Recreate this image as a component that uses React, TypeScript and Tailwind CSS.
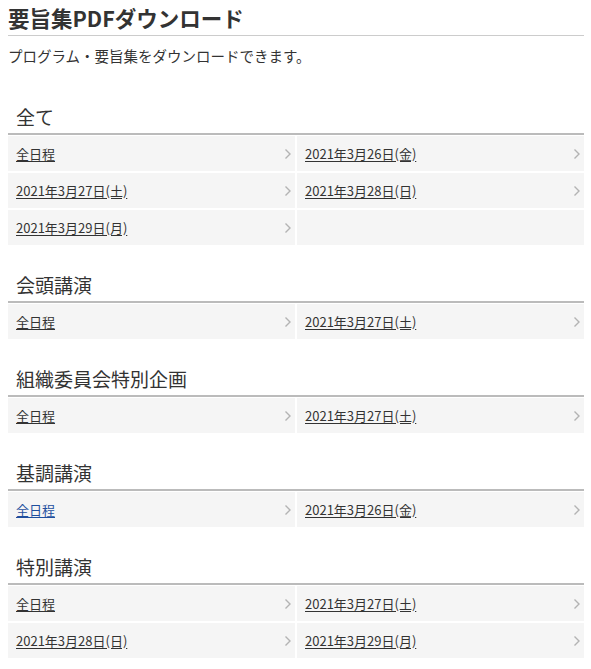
import React from "react";

type Item = { label: string; active?: boolean };
type Section = { title: string; items: Item[] };

const sections: Section[] = [
  {
    title: "全て",
    items: [
      { label: "全日程" },
      { label: "2021年3月26日(金)" },
      { label: "2021年3月27日(土)" },
      { label: "2021年3月28日(日)" },
      { label: "2021年3月29日(月)" },
    ],
  },
  { title: "会頭講演", items: [{ label: "全日程" }, { label: "2021年3月27日(土)" }] },
  { title: "組織委員会特別企画", items: [{ label: "全日程" }, { label: "2021年3月27日(土)" }] },
  { title: "基調講演", items: [{ label: "全日程", active: true }, { label: "2021年3月26日(金)" }] },
  {
    title: "特別講演",
    items: [
      { label: "全日程" },
      { label: "2021年3月27日(土)" },
      { label: "2021年3月28日(日)" },
      { label: "2021年3月29日(月)" },
    ],
  },
];

function Chevron() {
  return (
    <svg width="8" height="12" viewBox="0 0 8 12" className="shrink-0">
      <polyline points="1.5,1.5 6,6 1.5,10.5" fill="none" stroke="#b3b3b3" strokeWidth="1.4" />
    </svg>
  );
}

export default function App() {
  return (
    <div
      className="bg-white text-[#333333] w-[591px] min-h-[669px]"
      style={{ fontFamily: '"Noto Sans CJK JP", "Noto Sans", sans-serif' }}
    >
      <div className="ml-2 w-[576px]">
        <h1 className="text-[21.5px] font-bold leading-[35px] border-b border-[#cccccc] text-[#333333]">
          要旨集PDFダウンロード
        </h1>
        <p className="mt-[10px] text-[14.5px] leading-[20px]">プログラム・要旨集をダウンロードできます。</p>
        {sections.map((s, i) => (
          <section key={i} className={i === 0 ? "mt-[38px]" : "mt-[27px]"}>
            <h2 className="text-[19px] leading-[26px] pl-2 pb-[3px] border-b-2 border-[#bbbbbb] font-normal">
              {s.title}
            </h2>
            <ul className="grid grid-cols-2 gap-[2px] mt-[1px]">
              {s.items.map((it, j) => (
                <li key={j} className="h-[35px] bg-[#f5f5f5] flex items-center justify-between pl-2 pr-[3px]">
                  <a
                    href="#"
                    className={
                      "text-[13px] underline underline-offset-2 " +
                      (it.active ? "text-[#1f4f9e]" : "text-[#333333]")
                    }
                  >
                    {it.label}
                  </a>
                  <Chevron />
                </li>
              ))}
              {s.items.length % 2 === 1 && <li className="h-[35px] bg-[#f5f5f5]" />}
            </ul>
          </section>
        ))}
      </div>
    </div>
  );
}
